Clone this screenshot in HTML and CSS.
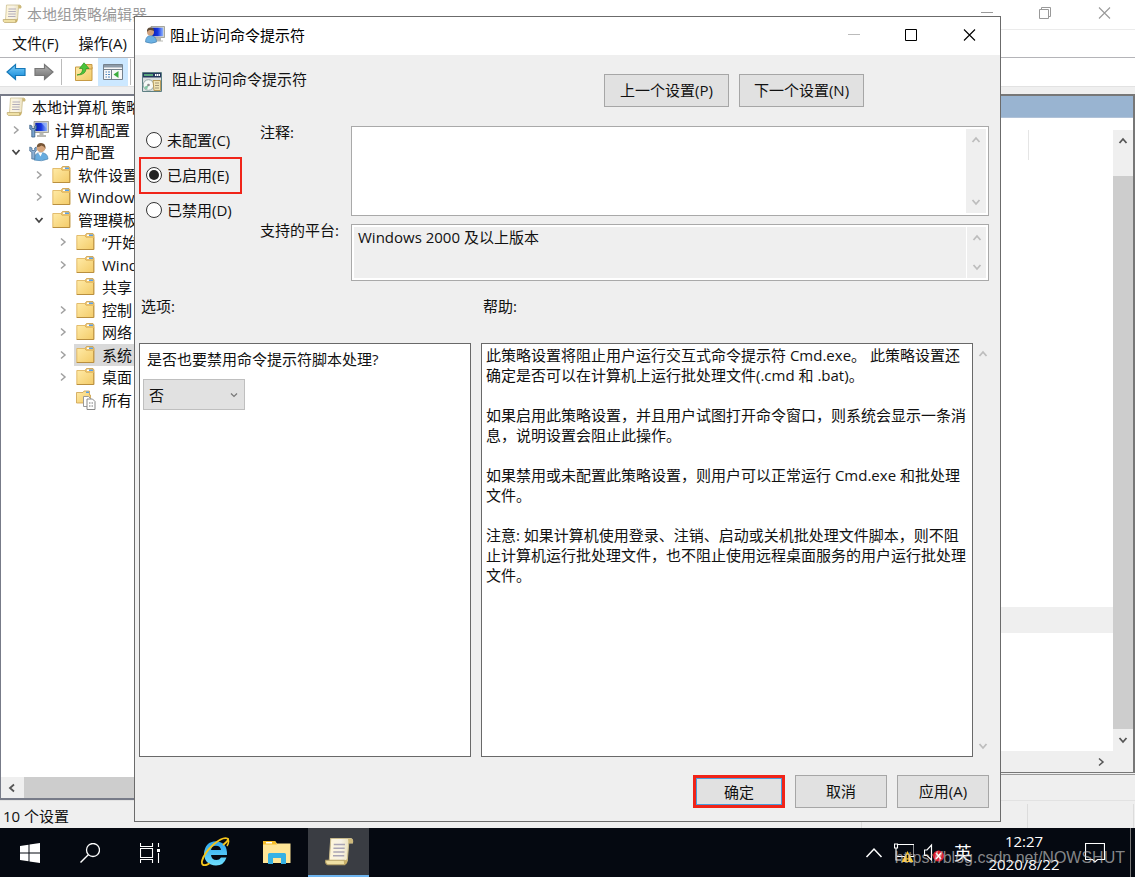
FILE: index.html
```html
<!DOCTYPE html>
<html lang="zh-CN">
<head>
<meta charset="utf-8">
<title>本地组策略编辑器</title>
<link rel="stylesheet" href="styles.css">
</head>
<body>
<svg class="defs" aria-hidden="true">
  <defs>
    <linearGradient id="paper" x1="0" x2="1" y1="0" y2="0"><stop offset="0" stop-color="#fff6d8"/><stop offset="0.5" stop-color="#f7f2e6"/><stop offset="1" stop-color="#e6d9a8"/></linearGradient>
    <linearGradient id="gold" x1="0" x2="1" y1="0" y2="1"><stop offset="0" stop-color="#ffeaa6"/><stop offset="1" stop-color="#f3cb68"/></linearGradient>
    <linearGradient id="blue" x1="0" x2="0" y1="0" y2="1"><stop offset="0" stop-color="#7fd0fa"/><stop offset="1" stop-color="#0a84d6"/></linearGradient>
    <linearGradient id="grey" x1="0" x2="0" y1="0" y2="1"><stop offset="0" stop-color="#b5b5b5"/><stop offset="1" stop-color="#6d6d6d"/></linearGradient>
    <linearGradient id="screen" x1="0" x2="1" y1="0" y2="0"><stop offset="0" stop-color="#0a1fb0"/><stop offset="0.5" stop-color="#1636e0"/><stop offset="1" stop-color="#8fb4ff"/></linearGradient>
    <linearGradient id="ie" x1="0" x2="0" y1="0" y2="1"><stop offset="0" stop-color="#2da3ea"/><stop offset="1" stop-color="#6fe0ff"/></linearGradient>
  </defs>
  <symbol id="scroll" viewBox="0 0 20 20">
    <path d="M4.500 1H18q1.500.500 1 3h-2.500L15.500 16H3.500z" fill="url(#paper)" stroke="#c9bb8c" stroke-width=".7"/>
    <path d="M16 1.300h2.500q1.300 1 .5 2.900h-2.600z" fill="#cdb879"/>
    <path d="M1.200 15.500h12.300l.3 3H2.500q-1.800-.8-1.300-3z" fill="#efe0a4" stroke="#b8a468" stroke-width=".7"/>
    <path d="M13.500 15.500q2 .3 2.200-2l-.2 3.500q-.5 1.500-2 1.500z" fill="#c9b169"/>
    <path d="M6.500 5h7.500M6.300 7.500h7.500M6.200 10h7.500M6 12.500h7.500" stroke="#aaa5b4" stroke-width=".9"/>
  </symbol>
  <symbol id="folder" viewBox="0 0 20 20">
    <path d="M9 3.500 10.500 1.500h6.500l1 1.500v3H9z" fill="#efc873" stroke="#c99c45" stroke-width=".8"/>
    <path d="M13 2.500h4v1.500h-4z" fill="#5aa0e8"/><path d="M11 2.500h2v1.500h-2z" fill="#fff"/>
    <path d="M.8 3.500h8l1.200 1.700h7.800V17.500H.8z" fill="url(#gold)" stroke="#dcae55" stroke-width=".8"/>
    <path d="M.8 17.500h17V6" fill="none" stroke="#b98f3f"/>
  </symbol>
  <symbol id="all" viewBox="0 0 20 20">
    <path d="M.5 2.500H7L8 1h5.500v4h1v8H.5z" fill="url(#gold)" stroke="#cda04d" stroke-width=".8"/><path d="M10 1.500h3V3h-3z" fill="#5aa0e8"/>
    <path d="M7.500 6.500h5l2 2v8h-7z" fill="#fff" stroke="#999"/><path d="M11 9h5.500L19 11.500v8h-8z" fill="#fff" stroke="#888"/><path d="M13 13h1.500M13 16h1.500M15.500 13H17M15.500 16H17" stroke="#777"/>
  </symbol>
  <symbol id="computer" viewBox="0 0 20 20">
    <path d="M5 1.500h14.500v11H5z" fill="#d8d8cc" stroke="#88887d" stroke-width=".7"/><path d="M6.300 2.800h11.700v8.300H6.300z" fill="url(#screen)"/><path d="M12 2.800h6v6z" fill="#9db9f8" opacity=".7"/>
    <path d="M10.500 12.500h4v2.500h2.500v2h-9v-2h2.500z" fill="#b8b9b4"/>
    <path d="M.8 5v4l2 1v7h3v-7l1.400-1V5L5.700 6v2.500H3V6z" fill="#7ba4cd" stroke="#385d85" stroke-width=".8"/>
  </symbol>
  <symbol id="user" viewBox="0 0 20 20">
    <path d="M5 18q0-7 6-7.500 8 0 8 6.500-6 3-14 1z" fill="#68acdf" stroke="#447aa8" stroke-width=".6"/><path d="M9 10.500l2.500 4 2-4z" fill="#fff"/>
    <circle cx="12" cy="6" r="4.300" fill="#d6a57d"/><path d="M7.800 5Q8 1 12 1q5 0 4.500 6-1-3-4-3.500-2 1.500-4.700 1.500z" fill="#765536"/>
    <path d="M.8 5v4l2 1v7h3v-7l1.400-1V5L5.700 6v2.500H3V6z" fill="#8db1d5" stroke="#4c7195" stroke-width=".8"/>
  </symbol>
  <symbol id="userpc" viewBox="0 0 20 20">
    <path d="M6 1.500h13.500v11H6z" fill="#d8d8cc" stroke="#88887d" stroke-width=".7"/><path d="M7.200 2.700h11v8.500h-11z" fill="url(#screen)"/><path d="M11 12.500h5v3h2v1h-8z" fill="#b8b9b4"/>
    <path d="M.5 17q0-6 5-6.500 6 .5 6 6.500-5 2.500-11 0z" fill="#6bb1e3" stroke="#3e79a8" stroke-width=".6"/><circle cx="5.500" cy="7" r="3.500" fill="#d0a17b"/><path d="M2 7q-.5-4.500 3.500-4.500T9 6Q6 4.500 4.500 5 3 5.500 2 7z" fill="#5e4a37"/>
  </symbol>
  <symbol id="policy" viewBox="0 0 20 20">
    <path d="M.5.500h19v19H.5z" fill="#d9dede" stroke="#5d7f83"/><path d="M1 1h18v4.500H1z" fill="#25385f"/><path d="M2 3h9" stroke="#59a77c" stroke-width="2"/><path d="M13 3h5" stroke="#fff" stroke-width="2" stroke-dasharray="1.500 .5"/>
    <circle cx="6.500" cy="13" r="5.300" fill="#f6f8f6" stroke="#98aaa9"/><path d="M6.500 13 2 15a5 5 0 0 0 3 2.800z" fill="#86c7a5"/><circle cx="6.500" cy="13" r="1.300" fill="#888"/>
    <path d="M11 8.500h7.500v10H12z" fill="#f2e5b5" stroke="#b79a58"/><path d="M13 11h4M13 13.500h4M13 16h4" stroke="#a39678"/>
  </symbol>
  <symbol id="arrow" viewBox="0 0 20 20"><path d="M1 10 9.500 2.500V6.500H19v7H9.500v4z" stroke-width="1.200"/></symbol>
  <symbol id="up" viewBox="0 0 12 12"><path d="M2.500 8 6 4l3.500 4" fill="none" stroke="currentColor" stroke-width="1.800"/></symbol>
  <symbol id="down" viewBox="0 0 12 12"><path d="M2.500 4 6 8l3.500-4" fill="none" stroke="currentColor" stroke-width="1.800"/></symbol>
  <symbol id="thin-down" viewBox="0 0 12 12"><path d="M3 4.500 6 7.500l3-3" fill="none" stroke="currentColor" stroke-width="1.200"/></symbol>
  <symbol id="right" viewBox="0 0 12 12"><path d="M4 2.500 8 6 4 9.500" fill="none" stroke="currentColor" stroke-width="1.500"/></symbol>
  <symbol id="left" viewBox="0 0 12 12"><path d="M8 2.500 4 6l4 3.500" fill="none" stroke="currentColor" stroke-width="1.800"/></symbol>
  <symbol id="min" viewBox="0 0 13 13"><path d="M1 5.500h12" stroke="currentColor"/></symbol>
  <symbol id="max" viewBox="0 0 13 13"><path d="M.5.500h11v11h-11z" fill="none" stroke="currentColor"/></symbol>
  <symbol id="restore" viewBox="0 0 13 13"><path d="M.5 2.500h9v9h-9zM2.500 2V.500h9v9H10" fill="none" stroke="currentColor"/></symbol>
  <symbol id="close" viewBox="0 0 13 13"><path d="M1 .5l11 11M12 .5 1 11.500" fill="none" stroke="currentColor" stroke-width="1.100"/></symbol>
</svg>

<div class="desktop">
  <main class="editor">
    <header class="editor-title">
      <svg class="icon"><use href="#scroll"/></svg>
      <span>本地组策略编辑器</span>
      <div class="controls">
        <button type="button" aria-label="最小化"><svg><use href="#min"/></svg></button>
        <button type="button" aria-label="还原"><svg><use href="#restore"/></svg></button>
        <button type="button" aria-label="关闭"><svg><use href="#close"/></svg></button>
      </div>
    </header>
    <nav class="menu">
      <button type="button">文件(F)</button>
      <button type="button">操作(A)</button>
    </nav>
    <div class="toolbar">
      <button type="button" aria-label="后退"><svg class="icon back"><use href="#arrow"/></svg></button>
      <button type="button" aria-label="前进"><svg class="icon forward" viewBox="0 0 20 20"><path d="M19 10 10.500 2.500V6.500H1v7h9.500v4z" stroke-width="1.200"/></svg></button>
      <span class="separator"></span>
      <button type="button" class="spaced" aria-label="上一级"><svg class="icon" viewBox="0 0 20 20"><path d="M1.500 5h16.500v13.500H1.500z" fill="url(#gold)" stroke="#c79b45"/><path d="M11 5 12 2.500h6V7h-7z" fill="#efc873" stroke="#c79b45"/><path d="M3 13Q9 12 8.500 6.500H5.500L10 .8l5 5.700h-3Q12 13 3 13z" fill="#4bc43b" stroke="#299321" stroke-width=".7"/></svg></button>
      <button type="button" class="pressed" aria-label="显示控制台树"><svg class="icon" viewBox="0 0 20 20"><path d="M.5 2.500h19v15H.5z" fill="#f7f7f7" stroke="#75818c"/><path d="M1 3h18v2.500H1z" fill="#8d9ba8"/><path d="M1 7.500h18M8.500 7.500V17" stroke="#75818c"/><path d="M2.500 10h1.500M2.500 12.500H4M2.500 15H4M5 10h2M5 12.500h2M5 15h2" stroke="#4e86bd"/><path d="M15.500 9v7L10.500 12.500z" fill="#3cad3c"/></svg></button>
      <span class="separator"></span>
    </div>
    <div class="panes">
      <section class="tree-pane">
        <ul class="tree">
          <li class="root"><span class="node"><svg class="icon"><use href="#scroll"/></svg>本地计算机 策略</span></li>
          <li><svg class="twist"><use href="#right"/></svg><span class="node"><svg class="icon"><use href="#computer"/></svg>计算机配置</span></li>
          <li><svg class="twist open"><use href="#down"/></svg><span class="node"><svg class="icon"><use href="#user"/></svg>用户配置</span></li>
          <li class="second"><svg class="twist"><use href="#right"/></svg><span class="node"><svg class="icon"><use href="#folder"/></svg>软件设置</span></li>
          <li class="second"><svg class="twist"><use href="#right"/></svg><span class="node"><svg class="icon"><use href="#folder"/></svg>Windows</span></li>
          <li class="second"><svg class="twist open"><use href="#down"/></svg><span class="node"><svg class="icon"><use href="#folder"/></svg>管理模板</span></li>
          <li class="third"><svg class="twist"><use href="#right"/></svg><span class="node"><svg class="icon"><use href="#folder"/></svg>“开始</span></li>
          <li class="third"><svg class="twist"><use href="#right"/></svg><span class="node"><svg class="icon"><use href="#folder"/></svg>Wind</span></li>
          <li class="third"><span class="twist"></span><span class="node"><svg class="icon"><use href="#folder"/></svg>共享</span></li>
          <li class="third"><svg class="twist"><use href="#right"/></svg><span class="node"><svg class="icon"><use href="#folder"/></svg>控制</span></li>
          <li class="third"><svg class="twist"><use href="#right"/></svg><span class="node"><svg class="icon"><use href="#folder"/></svg>网络</span></li>
          <li class="third"><svg class="twist"><use href="#right"/></svg><span class="node selected"><svg class="icon"><use href="#folder"/></svg>系统</span></li>
          <li class="third"><svg class="twist"><use href="#right"/></svg><span class="node"><svg class="icon"><use href="#folder"/></svg>桌面</span></li>
          <li class="third"><span class="twist"></span><span class="node"><svg class="icon"><use href="#all"/></svg>所有</span></li>
        </ul>
        <div class="tree-scroll"><svg class="caret"><use href="#left"/></svg><span class="thumb"></span></div>
      </section>
      <section class="detail">
        <div class="view">
          <div class="band"></div>
          <div class="view-body">
            <div class="list"><span class="column"></span><span class="row"></span></div>
            <div class="list-scroll"><svg class="caret"><use href="#up"/></svg><span class="thumb"></span><svg class="caret"><use href="#down"/></svg></div>
          </div>
          <div class="view-scroll"><svg class="caret"><use href="#right"/></svg></div>
        </div>
        <div class="tabs"></div>
      </section>
    </div>
    <footer class="status"><span class="count">10 个设置</span><span class="cell"></span><span class="cell last"></span></footer>
  </main>

  <form class="dialog" role="dialog" aria-labelledby="dialog-title">
    <header class="dialog-title">
      <svg class="icon"><use href="#userpc"/></svg>
      <span id="dialog-title">阻止访问命令提示符</span>
      <div class="controls">
        <button type="button" class="dim" aria-label="最小化"><svg><use href="#min"/></svg></button>
        <button type="button" aria-label="最大化"><svg><use href="#max"/></svg></button>
        <button type="button" aria-label="关闭"><svg><use href="#close"/></svg></button>
      </div>
    </header>
    <div class="dialog-body">
      <div class="heading">
        <svg class="icon"><use href="#policy"/></svg>
        <span class="policy-name">阻止访问命令提示符</span>
        <div class="pager">
          <button type="button" class="button wide">上一个设置(P)</button>
          <button type="button" class="button wide">下一个设置(N)</button>
        </div>
      </div>
      <div class="settings">
        <div class="states">
          <label class="state"><input type="radio" name="state">未配置(C)</label>
          <label class="state marked"><input type="radio" name="state" checked>已启用(E)</label>
          <label class="state"><input type="radio" name="state">已禁用(D)</label>
        </div>
        <label class="field-label" for="comment">注释:</label>
        <div class="field comment"><textarea id="comment"></textarea><div class="field-scroll"><svg class="caret"><use href="#up"/></svg><svg class="caret"><use href="#down"/></svg></div></div>
        <label class="field-label" for="platform">支持的平台:</label>
        <div class="field platform"><textarea id="platform" readonly>Windows 2000 及以上版本</textarea><div class="field-scroll"><svg class="caret"><use href="#up"/></svg><svg class="caret"><use href="#down"/></svg></div></div>
      </div>
      <div class="columns">
        <div class="column-label">选项:</div>
        <div class="column-label">帮助:</div>
        <div class="box options">
          <label for="script">是否也要禁用命令提示符脚本处理?</label>
          <div class="picker"><select id="script"><option>否</option></select><svg class="caret"><use href="#thin-down"/></svg></div>
        </div>
        <div class="help">
          <div class="box help-text">
            <p>此策略设置将阻止用户运行交互式命令提示符 Cmd.exe。 此策略设置还<br>确定是否可以在计算机上运行批处理文件(.cmd 和 .bat)。</p>
            <p>如果启用此策略设置，并且用户试图打开命令窗口，则系统会显示一条消<br>息，说明设置会阻止此操作。</p>
            <p>如果禁用或未配置此策略设置，则用户可以正常运行 Cmd.exe 和批处理<br>文件。</p>
            <p>注意: 如果计算机使用登录、注销、启动或关机批处理文件脚本，则不阻<br>止计算机运行批处理文件，也不阻止使用远程桌面服务的用户运行批处理<br>文件。</p>
          </div>
          <div class="field-scroll"><svg class="caret"><use href="#up"/></svg><svg class="caret"><use href="#down"/></svg></div>
        </div>
      </div>
      <div class="actions">
        <button type="button" class="button primary">确定</button>
        <button type="button" class="button">取消</button>
        <button type="button" class="button">应用(A)</button>
      </div>
    </div>
  </form>

  <footer class="taskbar">
    <div class="system">
      <button type="button" aria-label="开始"><svg viewBox="0 0 20 20"><path d="M0 3 8.500 1.800V9.500H0zM9.500 1.600 20 0v9.500H9.500zM0 10.500h8.500v7.700L0 17zM9.500 10.500H20V20L9.500 18.400z" fill="#fff"/></svg></button>
      <button type="button" aria-label="搜索"><svg viewBox="0 0 20 20"><circle cx="13" cy="7" r="6.500" fill="none" stroke="#fff" stroke-width="1.300"/><path d="M8.300 11.700.5 19.500" stroke="#fff" stroke-width="1.400"/></svg></button>
      <button type="button" aria-label="任务视图"><svg viewBox="0 0 20 20"><path d="M.5 0v3.500h12V0M.5 20v-3.500h12V20M.5 5.500h12v9H.5zM18.500 0v4M18.500 10v10" fill="none" stroke="#fff" stroke-width="1.100"/><path d="M17 6h3v3h-3z" fill="#fff"/></svg></button>
    </div>
    <div class="apps">
      <button type="button" aria-label="Internet Explorer"><svg viewBox="0 0 30 30"><path d="M27 18H11q.5 5 5.500 5 3 0 4.500-2.500h5.500Q24 28.500 16 28.500 4.500 28 4 16.500 5 4.500 16 4.200 27.500 5 27 18zM21 13q-.5-4.300-5-4.300T11 13z" fill="url(#ie)"/><path d="M23 8Q30 2.500 27.500 1.500 23-.5 14 7 4 16 2 24q-.8 5 4 4 1.500-.3 3.500-1.800" fill="none" stroke="#f4c51c" stroke-width="1.800"/><path d="M27.500 1.500Q30 4 27 9" fill="none" stroke="#f4c51c" stroke-width="1.500"/></svg></button>
      <button type="button" aria-label="文件资源管理器"><svg viewBox="0 0 30 30"><path d="M1 4h12l2 2.500h13.500V26H1z" fill="#ffe596"/><path d="M1 4h12l2 3.500H1z" fill="#f6bd27"/><path d="M4 5h6v1.500H4z" fill="#fff"/><path d="M6 27V17.500q0-1.500 1.500-1.500h15q1.500 0 1.500 1.500V27h-5v-6h-8v6z" fill="#35b1e4"/></svg></button>
      <button type="button" class="active" aria-label="本地组策略编辑器"><svg><use href="#scroll"/></svg></button>
    </div>
    <div class="tray">
      <svg class="tray-icon" viewBox="0 0 20 20"><path d="m2.500 14 7.500-8 7.500 8" fill="none" stroke="#fff" stroke-width="1.500"/></svg>
      <svg class="tray-icon" viewBox="0 0 20 20"><path d="M3 1.500h17v12H3M.5 1v4h3V1zM2 5v12h5" fill="none" stroke="#fff" stroke-width="1.100"/><path d="m13.500 8 6 11h-12z" fill="#fcc42a"/><path d="M13.500 11.500v3.800M13.500 16.500V18" stroke="#111" stroke-width="1.500"/></svg>
      <svg class="tray-icon" viewBox="0 0 20 20"><path d="M.5 7H3l4.500-5v15L3 12.500H.5z" fill="none" stroke="#fff" stroke-width="1.200"/><circle cx="14.500" cy="13" r="5.500" fill="#e1212f"/><path d="m12 10 5 6m0-6-5 6" stroke="#fff" stroke-width="1.500"/></svg>
      <span class="language">英</span>
      <div class="clock"><span>12:27</span><span>2020/8/22</span></div>
      <svg class="notice" viewBox="0 0 20 20"><path d="M.5.500h19v16h-7L10 19 7.500 16.500h-7z" fill="none" stroke="#fff" stroke-width="1.200"/></svg>
    </div>
    <span class="watermark">https://blog.csdn.net/NOWSHUT</span>
  </footer>
</div>
</body>
</html>
```
FILE: styles.css
```css
* { box-sizing: border-box; }
body {
  margin: 0;
  color: #111;
  background: #fff;
  font: 15px/20px "Open Sans", "Noto Sans CJK SC", sans-serif;
  text-spacing-trim: space-all;
}
button, select, textarea { font: inherit; color: inherit; }
button { padding: 0; border: 0; background: none; }
svg { display: block; flex: none; }
.defs { position: absolute; width: 0; height: 0; }
.icon { width: 20px; height: 20px; }
.caret { width: 12px; height: 12px; color: #555; }
.desktop { position: relative; display: flex; flex-direction: column; min-height: 100vh; }

/* Editor window */
.editor { flex: 1; display: flex; flex-direction: column; background: #fff; }
.editor-title { display: flex; align-items: center; gap: 5px; height: 30px; padding: 0 1px 2px 2px; border-bottom: 1px solid #ebebeb; color: #999; }
.controls { display: flex; margin-left: auto; }
.controls button { display: grid; place-items: center; width: 59px; height: 27px; }
.controls svg { width: 13px; height: 13px; }
.menu { display: flex; gap: 20px; height: 28px; padding: 0 0 2px 12px; border-bottom: 1px solid #b4b4b8; }
.toolbar { display: flex; align-items: center; height: 29px; padding-left: 6px; gap: 8px; border-bottom: 1px solid #e2e2e2; }
.back { fill: url(#blue); stroke: #1678b8; }
.forward { fill: url(#grey); stroke: #777; }
.separator { width: 1px; height: 26px; background: #bbb; }
.toolbar button:nth-child(2) { margin-right: -1px; }
.spaced { margin-left: 4px; }
.toolbar .pressed { display: grid; place-items: center; width: 30px; height: 28px; margin: 0 -6px 0 -4px; background: #cce8ff; }
.panes { flex: 1; display: flex; gap: 4px; padding-top: 7px; background: #efefef; }
.tree-pane { display: flex; flex-direction: column; width: 200px; border: 1px solid #777b88; border-top-width: 2px; border-bottom-width: 2px; background: #fff; }
.tree { display: flex; flex-direction: column; height: 315px; margin: 0; padding: 0; list-style: none; }
.tree li { flex: 1; display: flex; align-items: center; padding-left: 9px; white-space: nowrap; }
.tree .root { padding-left: 2px; }
.tree .second { padding-left: 32px; }
.tree .third { padding-left: 56px; }
.twist { width: 12px; height: 12px; color: #a0a0a0; }
.open { color: #444; }
.node { flex: 1; display: flex; align-items: center; gap: 6px; height: 22px; margin-left: 5px; padding-left: 2px; }
.root .node { margin-left: 0; padding-left: 3px; }
.selected { background: #d9d9d9; }
.tree-scroll { display: flex; align-items: center; height: 21px; margin-top: auto; background: #efefef; }
.tree-scroll .caret { margin: 0 6px 0 5px; }
.tree-scroll .thumb { flex: 1; height: 100%; background: #cdcdcd; }
.detail { flex: 1; display: flex; flex-direction: column; }
.view { flex: 1; display: flex; flex-direction: column; border: 2px solid #777; border-bottom-width: 1px; background: #fff; }
.band { height: 22px; background: #99b4d1; border-bottom: 1px solid #b0c2d8; }
.view-body { flex: 1; display: flex; padding-top: 12px; }
.list { flex: 1; display: flex; flex-direction: column; justify-content: space-between; }
.column { width: 1px; height: 30px; margin-left: auto; margin-right: 84px; background: #e5e5e5; }
.row { height: 26px; margin-bottom: 118px; background: #efefef; }
.list-scroll { display: flex; flex-direction: column; align-items: center; width: 20px; background: #efefef; }
.list-scroll .caret { margin: 5px 0; }
.list-scroll .thumb { flex: 1; width: 100%; margin-top: 24px; background: #cdcdcd; }
.view-scroll { display: flex; justify-content: flex-end; align-items: center; height: 21px; padding-right: 26px; background: #efefef; color: #555; }
.tabs { height: 26px; border-top: 1px solid #999; margin-top: 1px; }
.status { display: flex; align-items: center; height: 28px; padding: 2px 1px 0 3px; border-top: 1px solid #e2e2e2; background: #efefef; }
.count { flex: 1; padding-top: 1px; }
.cell { width: 166px; height: 24px; border-left: 1px solid #dcdcdc; }
.last { width: 107px; border-right: 1px solid #dcdcdc; }

/* Policy dialog, floating over the editor */
.dialog { position: absolute; inset: 16px 134px 55px 134px; display: flex; flex-direction: column; border: 1px solid #6b6b6b; background: #efefef; color: #111; }
.dialog-title { display: flex; align-items: center; gap: 5px; height: 38px; padding: 0 0 2px 10px; background: #fff; color: #000; }
.dialog-title .controls { padding-right: 2px; }
.dialog-title .controls button { width: 58px; }
.controls .dim { color: #bbb; }
.dialog-body { flex: 1; display: flex; flex-direction: column; padding: 19px 11px 13px 4px; }
.heading { display: flex; align-items: flex-start; gap: 10px; padding-left: 3px; }
.heading .icon { margin-top: -2px; }
.policy-name { margin-top: -5px; }
.pager { display: flex; gap: 10px; margin: 0 125px 0 auto; }
.button { width: 92px; height: 33px; padding-bottom: 2px; border: 1px solid #a6a6a6; background: #e1e1e1; }
.wide { width: 125px; }
.settings { display: grid; grid-template-columns: 121px 91px 1fr; grid-template-rows: 90px 57px; row-gap: 8px; padding-top: 19px; }
.states { grid-row: 1 / 3; display: flex; flex-direction: column; align-items: flex-start; }
.state { display: flex; align-items: center; gap: 5px; width: 103px; height: 31px; padding-left: 7px; }
.state.marked { height: 37px; padding: 0 0 2px 5px; border: 2px solid #f02419; }
.state:first-child { height: 27px; margin-bottom: 4px; }
.state input { appearance: none; display: grid; place-items: center; width: 16px; height: 16px; margin: 0; border: 1px solid #333; border-radius: 50%; background: #fff; }
.state input:checked::after { content: ""; width: 10px; height: 10px; border-radius: 50%; background: #222; }
.field-label { margin-top: -4px; }
.field { display: flex; border: 1px solid #a9a9a9; background: #fff; padding: 2px; }
.field textarea { flex: 1; display: block; padding: 0 4px; border: 0; outline: 0; resize: none; background: #fff; overflow: hidden; }
.platform textarea { background: #efefef; }
.field-scroll { display: flex; flex-direction: column; justify-content: space-between; align-items: center; width: 20px; padding: 5px 0; background: #efefef; }
.field-scroll .caret { color: #bdbdbd; }
.platform .field-scroll { border-left: 1px solid #fff; }
.columns { flex: 1; display: grid; grid-template-columns: 332fr 508fr; grid-template-rows: 62px 1fr; column-gap: 10px; }
.column-label { padding: 15px 2px 0; }
.box { border: 1px solid #696969; background: #fff; }
.options { display: flex; flex-direction: column; gap: 10px; padding: 5px 3px; }
.options label { padding-left: 4px; }
.picker { display: grid; grid-template-columns: 102px; align-items: center; }
.picker select { grid-area: 1 / 1; appearance: none; height: 31px; padding: 0 5px; border: 1px solid #bfbfbf; border-radius: 0; background: #e1e1e1; }
.picker .caret { grid-area: 1 / 1; justify-self: end; margin-right: 5px; color: #777; pointer-events: none; }
.help { display: flex; }
.help-text { flex: 1; padding: 1px 0 0 4px; white-space: nowrap; }
.help-text p { margin: 0 0 20px; }
.help .field-scroll { width: 16px; padding-left: 4px; }
.actions { display: flex; justify-content: flex-end; gap: 10px; padding-top: 18px; }
.primary { padding: 0; border: 3px solid #f02419; outline: 1px solid #4a9ddb; outline-offset: -4px; }

/* Taskbar */
.taskbar { position: relative; display: flex; height: 49px; background: #050911; color: #fff; }
.system, .apps { display: flex; }
.system button, .apps button { display: grid; place-items: center; width: 60px; height: 49px; }
.system svg { width: 20px; height: 20px; }
.apps { gap: 1px; margin-left: 4px; }
.apps button { width: 61px; border-bottom: 2px solid transparent; }
.apps svg { width: 30px; height: 30px; }
.apps .active { background: #3a3d43; border-color: #6eb5f0; }
.tray { display: flex; align-items: center; gap: 10px; margin: 0 4px 0 auto; padding-right: 4px; border-right: 1px solid #777; }
.tray-icon { width: 20px; height: 20px; }
.language { width: 20px; font-size: 18px; }
.clock { display: flex; flex-direction: column; align-items: center; width: 80px; line-height: 23px; }
.notice { width: 20px; height: 20px; margin: 0 21px 0 11px; }
.watermark { position: absolute; right: 10px; top: 20px; font: 16px/20px "Liberation Sans", sans-serif; color: rgba(205, 205, 205, .65); }
```
